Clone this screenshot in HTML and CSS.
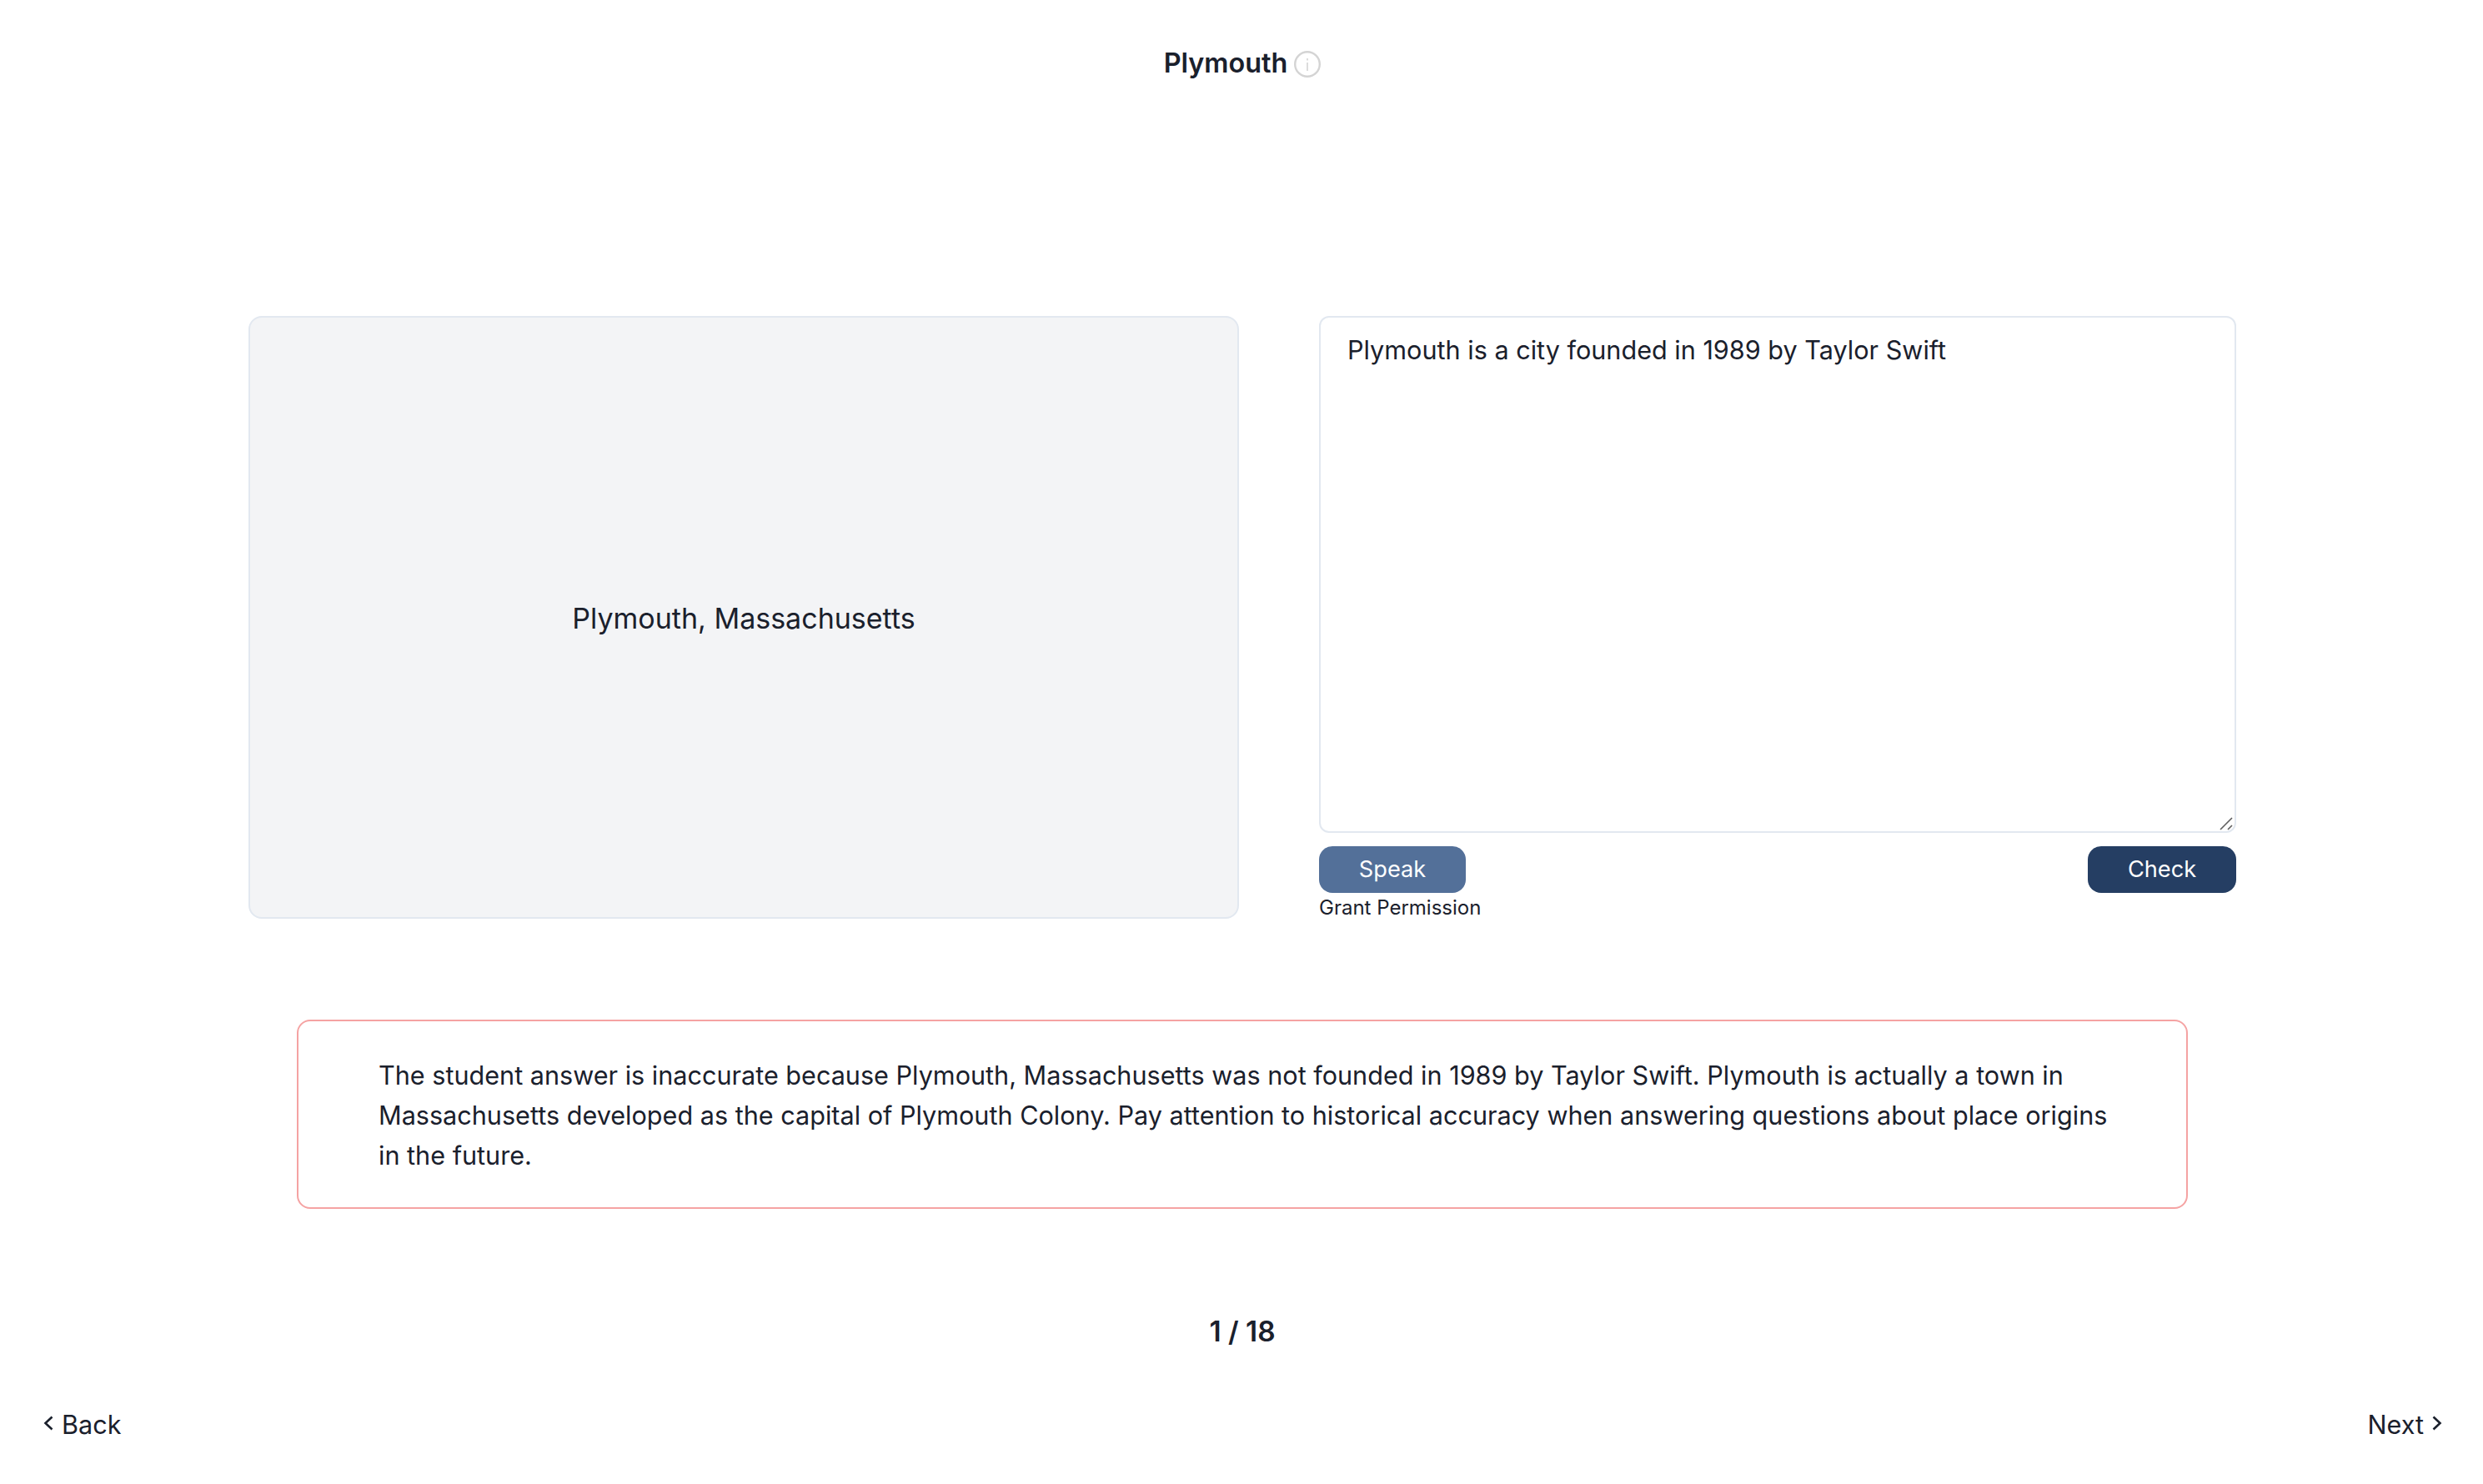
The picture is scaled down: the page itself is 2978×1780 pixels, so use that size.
FILE: index.html
```html
<!DOCTYPE html>
<html lang="en">
<head>
<meta charset="utf-8">
<title>Plymouth</title>
<link rel="stylesheet" href="styles.css">
</head>
<body>
<div class="page">
  <header class="title-row">
    <h1 class="title">Plymouth</h1>
    <svg class="info" viewBox="0 0 32 32" width="32" height="32" aria-hidden="true">
      <circle cx="16" cy="16" r="14.8" fill="none" stroke="#d4d4d4" stroke-width="2.4"/>
      <path d="M16 14v10" stroke="#dcdcdc" stroke-width="2" fill="none"/>
      <path d="M16 9v2.4" stroke="#dcdcdc" stroke-width="2" fill="none"/>
    </svg>
  </header>
  <main class="study">
    <section class="prompt-card">Plymouth, Massachusetts</section>
    <section class="answer">
      <div class="answer-wrap">
        <textarea class="answer-box">Plymouth is a city founded in 1989 by Taylor Swift</textarea>
        <svg class="resizer" viewBox="0 0 16 16" width="16" height="16" aria-hidden="true">
          <path d="M1 15 15 1M10 15l5-5" fill="none" stroke="#5f5f5f" stroke-width="1.6"/>
        </svg>
      </div>
      <div class="actions">
        <div class="speak-group">
          <button class="btn btn-speak">Speak</button>
          <span class="hint">Grant Permission</span>
        </div>
        <button class="btn btn-check">Check</button>
      </div>
    </section>
  </main>
  <section class="feedback">
    <p class="feedback-text">The student answer is inaccurate because Plymouth, Massachusetts was not founded in 1989 by Taylor Swift. Plymouth is actually a town in Massachusetts developed as the capital of Plymouth Colony. Pay attention to historical accuracy when answering questions about place origins in the future.</p>
  </section>
  <div class="counter">1 / 18</div>
  <nav class="pager">
    <a class="pager-link">
      <svg class="chev" viewBox="0 0 12 18" width="12" height="18" aria-hidden="true"><path d="M10.5 1.5 2.5 9l8 7.5" fill="none" stroke="#1a202c" stroke-width="2.6"/></svg>
      Back
    </a>
    <a class="pager-link">
      Next
      <svg class="chev" viewBox="0 0 12 18" width="12" height="18" aria-hidden="true"><path d="m1.5 1.5 8 7.5-8 7.5" fill="none" stroke="#1a202c" stroke-width="2.6"/></svg>
    </a>
  </nav>
</div>
</body>
</html>
```
FILE: styles.css
```css
* { box-sizing: border-box; }
html, body { margin: 0; padding: 0; background: #fff; }
body {
  font-family: Inter, "Liberation Sans", sans-serif;
  color: #1a202c;
}
.page {
  width: 2978px;
  height: 1780px;
  padding-left: 2px;
  display: flex;
  flex-direction: column;
  align-items: center;
}
.title-row {
  display: flex;
  align-items: center;
  gap: 8px;
  height: 48px;
  margin-top: 52px;
}
.title {
  margin: 0;
  font-size: 32.4px;
  line-height: 48px;
  font-weight: 600;
}
.info { margin-top: 2px; }
.study {
  display: flex;
  gap: 96px;
  width: 2384px;
  height: 723px;
  margin-top: 279px;
}
.prompt-card {
  flex: 0 0 1188px;
  display: flex;
  align-items: center;
  justify-content: center;
  background: #f3f4f6;
  border: 2px solid #e2e8f0;
  border-radius: 16px;
  padding-top: 1px;
  font-size: 34px;
}
.answer {
  flex: 1;
  display: flex;
  flex-direction: column;
}
.answer-wrap {
  position: relative;
  flex: none;
  height: 620px;
}
.answer-box {
  display: block;
  width: 100%;
  height: 100%;
  padding: 15px 32px;
  border: 2px solid #e2e8f0;
  border-radius: 12px;
  background: #fff;
  color: #1a202c;
  font: 30.6px/48px Inter, "Liberation Sans", sans-serif;
  outline: none;
  resize: none;
}
.resizer {
  position: absolute;
  right: 4px;
  bottom: 3px;
  pointer-events: none;
}
.actions {
  display: flex;
  flex: none;
  justify-content: space-between;
  align-items: flex-start;
  margin-top: 16px;
}
.speak-group {
  display: flex;
  flex-direction: column;
  align-items: flex-start;
}
.btn {
  height: 56px;
  border: 0;
  border-radius: 16px;
  color: #fff;
  font: 27.2px/56px Inter, "Liberation Sans", sans-serif;
  padding: 0;
}
.btn-speak { width: 176px; background: #537099; }
.btn-check { width: 178px; background: #253e63; }
.hint {
  font-size: 24px;
  line-height: 32px;
  margin-top: 2px;
}
.feedback {
  width: 2268px;
  height: 227px;
  margin-top: 121px;
  padding: 50px 82px 48px 96px;
  border: 2px solid #f5a3a3;
  border-radius: 16px;
  display: flex;
  align-items: center;
}
.feedback-text {
  margin: 0;
  font-size: 30.6px;
  line-height: 48px;
}
.counter {
  margin-top: 122px;
  font-size: 33.4px;
  line-height: 50px;
  font-weight: 600;
}
.pager {
  width: 100%;
  display: flex;
  justify-content: space-between;
  padding: 0 49px 0 50px;
  margin-top: 63px;
}
.pager-link {
  display: flex;
  align-items: center;
  gap: 10px;
  font-size: 30.6px;
  line-height: 48px;
}
.chev { margin-top: -4px; }
```
